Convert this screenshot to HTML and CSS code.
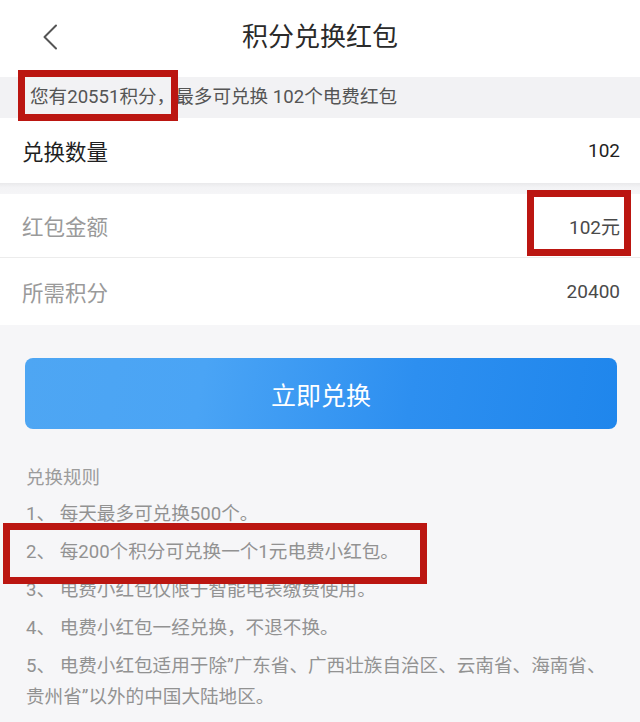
FILE: index.html
```html
<!DOCTYPE html>
<html lang="zh-CN">
<head>
<meta charset="utf-8">
<title>积分兑换红包</title>
<link rel="stylesheet" href="styles.css">
</head>
<body>
<div class="page">
  <header class="topbar">
    <div class="back">
      <svg width="16" height="26" viewBox="0 0 16 26"><path d="M14 1.5 L2.5 13 L14 24.5" fill="none" stroke="#555" stroke-width="2" stroke-linecap="round" stroke-linejoin="round"/></svg>
    </div>
    <h1 class="title">积分兑换红包</h1>
    <div></div>
  </header>

  <div class="info">您有20551积分，最多可兑换 102个电费红包</div>

  <section class="card">
    <div class="row main"><span class="label">兑换数量</span><span class="value">102</span></div>
  </section>
  <div class="band"></div>
  <section class="card">
    <div class="row"><span class="label">红包金额</span><span class="value">102元</span></div>
    <div class="row last"><span class="label">所需积分</span><span class="value">20400</span></div>
  </section>

  <div class="action"><button class="btn">立即兑换</button></div>

  <section class="rules">
    <div class="rules-title">兑换规则</div>
    <ol class="rule-list">
      <li>1、 每天最多可兑换500个。</li>
      <li>2、 每200个积分可兑换一个1元电费小红包。</li>
      <li>3、 电费小红包仅限于智能电表缴费使用。</li>
      <li>4、 电费小红包一经兑换，不退不换。</li>
      <li>5、 电费小红包适用于除”广东省、广西壮族自治区、云南省、海南省、贵州省”以外的中国大陆地区。</li>
    </ol>
  </section>

  <div class="mark mark-1"></div>
  <div class="mark mark-2"></div>
  <div class="mark mark-3"></div>
</div>
</body>
</html>
```

FILE: styles.css
```css
* { box-sizing: border-box; margin: 0; padding: 0; }
html, body { width: 640px; height: 722px; overflow: hidden; }
body {
  background: #f6f6f8;
  font-family: Roboto, "Noto Sans CJK SC", "Noto Sans", sans-serif;
  color: #333;
}
.page { position: relative; width: 640px; height: 722px; }

.topbar {
  height: 77px;
  background: #fff;
  display: grid;
  grid-template-columns: 1fr auto 1fr;
  align-items: center;
}
.back { padding-left: 42px; display: flex; align-items: center; padding-bottom: 3px; }
.title {
  font-size: 26px;
  font-weight: 400;
  color: #2a2a2a;
  line-height: 1;
  padding-bottom: 3px;
}

.info {
  height: 41px;
  background: #f2f2f4;
  padding-left: 30px;
  font-size: 18.6px;
  line-height: 41px;
  color: #555;
}

.card { background: #fff; }
.row {
  display: flex;
  justify-content: space-between;
  align-items: center;
  padding: 0 20px 0 22px;
  height: 64px;
  border-bottom: 1px solid #ececec;
}
.row.main { height: 65px; border-bottom: none; }
.row.last { height: 67px; border-bottom: none; }
.label { font-size: 21.5px; color: #9a9a9a; }
.main .label { color: #1f1f1f; }
.value { font-size: 19px; color: #4a4a4a; }
.main .value { color: #1f1f1f; }

.band {
  height: 11px;
  background: linear-gradient(#e9e9eb, #f3f3f5 40%, #f5f5f7);
}

.action { padding: 33px 23px 0 25px; }
.btn {
  display: block;
  width: 100%;
  height: 71px;
  border: none;
  border-radius: 8px;
  background: linear-gradient(100deg, #4ea6f3 0%, #4aa4f5 30%, #2d8ff0 65%, #1f86ec 100%);
  color: #fff;
  font-family: inherit;
  font-size: 25px;
}

.rules { padding: 33px 30px 0 26px; }
.rules-title { font-size: 18.5px; line-height: 32px; color: #9c9c9c; margin-bottom: 5px; }
.rule-list { list-style: none; }
.rule-list li {
  font-size: 18.6px;
  line-height: 31px;
  color: #929292;
  margin-bottom: 7px;
}

.mark {
  position: absolute;
  border: 7px solid #bb1611;
  pointer-events: none;
}
.mark-1 { left: 18px; top: 70px; width: 160px; height: 51px; }
.mark-2 { left: 527px; top: 190px; width: 104px; height: 66px; }
.mark-3 { left: 3px; top: 523px; width: 424px; height: 61px; }
```
